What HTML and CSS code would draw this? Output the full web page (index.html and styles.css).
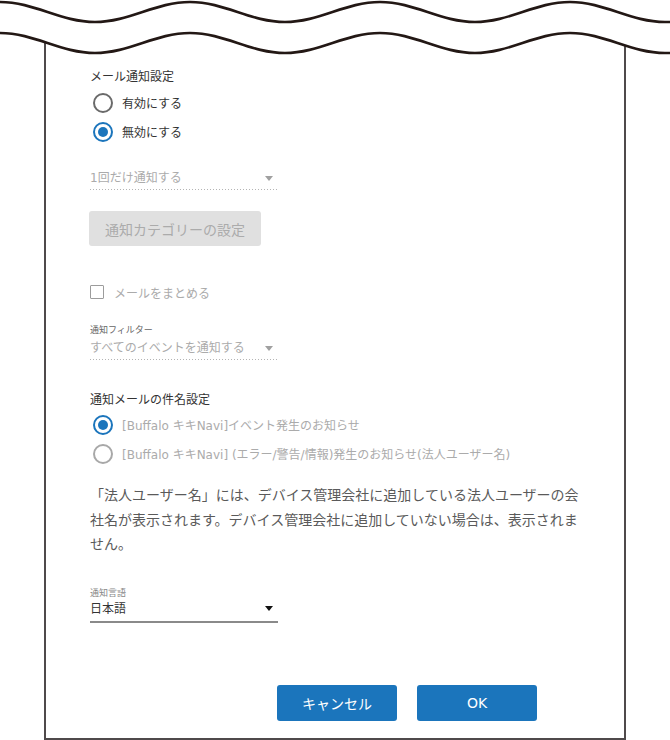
FILE: index.html
```html
<!DOCTYPE html>
<html>
<head>
    <meta charset="UTF-8">
    <meta name="viewport" content="width=device-width, initial-scale=1.0">
    <title>通知設定</title>
    <link rel="stylesheet" href="styles.css">
</head>
<body>
    <div class="sheet">
        <div class="field-title">メール通知設定</div>
        <div class="radio-list">
            <label class="radio"><span class="radio-mark"></span>有効にする</label>
            <label class="radio"><span class="radio-mark is-on"></span>無効にする</label>
        </div>

        <div class="select select-first is-disabled">
            <span>1回だけ通知する</span>
            <span class="caret"></span>
        </div>

        <button class="btn-sub" disabled>通知カテゴリーの設定</button>

        <label class="check is-disabled"><span class="check-box"></span>メールをまとめる</label>

        <div class="field field-filter">
            <div class="field-label">通知フィルター</div>
            <div class="select is-disabled">
                <span>すべてのイベントを通知する</span>
                <span class="caret"></span>
            </div>
        </div>

        <div class="field-title title-subject">通知メールの件名設定</div>
        <div class="radio-list is-disabled">
            <label class="radio"><span class="radio-mark is-on"></span>[Buffalo キキNavi]イベント発生のお知らせ</label>
            <label class="radio"><span class="radio-mark"></span>[Buffalo キキNavi] (エラー/警告/情報)発生のお知らせ(法人ユーザー名)</label>
        </div>

        <p class="note">「法人ユーザー名」には、デバイス管理会社に追加している法人ユーザーの会<br>社名が表示されます。デバイス管理会社に追加していない場合は、表示されま<br>せん。</p>

        <div class="field field-lang">
            <div class="field-label">通知言語</div>
            <div class="select select-solid">
                <span>日本語</span>
                <span class="caret"></span>
            </div>
        </div>

        <div class="actions">
            <button class="btn">キャンセル</button>
            <button class="btn">OK</button>
        </div>
    </div>

    <!-- torn edge over the top of the dialog -->
    <svg class="tear" width="670" height="60" viewBox="0 0 670 60">
        <path fill="#fff" d="M0,0 L0,33 C34.6,33 60.4,53 95,53 S155.4,33 190,33 S250.4,53 285,53 S345.4,33 380,33 S440.4,53 475,53 S535.4,33 570,33 S630.4,53 665,53 S725.4,33 760,33 L760,0 Z"/>
        <path fill="none" stroke="#231815" stroke-width="2.6" d="M0,2 C34.6,2 60.4,22 95,22 S155.4,2 190,2 S250.4,22 285,22 S345.4,2 380,2 S440.4,22 475,22 S535.4,2 570,2 S630.4,22 665,22 S725.4,2 760,2"/>
        <path fill="none" stroke="#231815" stroke-width="2.6" d="M0,33 C34.6,33 60.4,53 95,53 S155.4,33 190,33 S250.4,53 285,53 S345.4,33 380,33 S440.4,53 475,53 S535.4,33 570,33 S630.4,53 665,53 S725.4,33 760,33"/>
    </svg>
</body>
</html>
```

FILE: styles.css
```css
* {
    box-sizing: border-box;
}

body {
    margin: 0;
    width: 670px;
    height: 740px;
    overflow: hidden;
    position: relative;
    background: #fff;
    font-family: "DejaVu Sans", "Noto Sans CJK JP", sans-serif;
    font-size: 12px;
    color: #333;
}

.sheet {
    margin-left: 44px;
    width: 582px;
    height: 740px;
    border: 2px solid #4f4a4b;
    border-top: 0;
    padding: 68px 44px 0 44px;
}

.tear {
    position: absolute;
    top: 0;
    left: 0;
    display: block;
}

.field-title {
    line-height: 18px;
    color: #333;
}

.title-subject {
    margin-top: 31px;
}

.radio-list {
    margin-top: 2px;
}

.title-subject + .radio-list {
    margin-top: 1px;
}

.radio {
    display: flex;
    align-items: center;
    height: 29px;
    color: #333;
}

.radio-mark {
    width: 20px;
    height: 20px;
    margin-left: 3px;
    margin-right: 9px;
    border: 2px solid #6a6a6a;
    border-radius: 50%;
    display: flex;
    align-items: center;
    justify-content: center;
    flex-shrink: 0;
}

.radio-mark.is-on {
    border-color: #1b75bc;
}

.radio-mark.is-on::after {
    content: "";
    width: 10px;
    height: 10px;
    border-radius: 50%;
    background: #1b75bc;
}

.is-disabled .radio {
    color: #ababab;
}

.is-disabled .radio-mark {
    border-color: #a8a8a8;
}

.is-disabled .radio-mark.is-on {
    border-color: #1b75bc;
}

.select {
    width: 188px;
    display: flex;
    align-items: center;
    justify-content: space-between;
    line-height: 20px;
    padding-bottom: 2px;
    padding-right: 5px;
    background: linear-gradient(to right, #b4b4b4 1px, transparent 1px) left bottom / 3px 1px repeat-x;
}

.select-first {
    margin-top: 22px;
}

.select.is-disabled {
    color: #ababab;
}

.caret {
    width: 0;
    height: 0;
    border-left: 4px solid transparent;
    border-right: 4px solid transparent;
    border-top: 5px solid #a0a0a0;
}

.select-solid {
    color: #333;
    background: none;
    border-bottom: 2px solid #8a8a8a;
}

.select-solid .caret {
    border-top-color: #111;
}

.btn-sub {
    display: block;
    margin-top: 21px;
    margin-left: -1px;
    width: 172px;
    height: 35px;
    border: 0;
    border-radius: 3px;
    background: #e0e0e0;
    color: #ababab;
    font-family: inherit;
    font-size: 14px;
    padding: 0;
}

.check {
    display: flex;
    align-items: center;
    height: 20px;
    margin-top: 36px;
    color: #ababab;
}

.check-box {
    width: 14px;
    height: 14px;
    margin-right: 10px;
    border: 1.5px solid #9c9c9c;
    border-radius: 1px;
}

.field-label {
    font-size: 9px;
    line-height: 12px;
    color: #666;
}

.field-filter {
    margin-top: 22px;
}

.field-filter .select {
    margin-top: 2px;
}

.note {
    margin: 15px 0 0 0;
    font-size: 14px;
    line-height: 24.5px;
    color: #5a5a5a;
    white-space: nowrap;
}

.field-lang {
    margin-top: 30px;
}

.field-lang .field-label {
    color: #888;
}

.actions {
    display: flex;
    gap: 20px;
    margin-top: 62px;
    padding-left: 187px;
}

.btn {
    width: 120px;
    height: 36px;
    border: 0;
    border-radius: 3px;
    background: #1b75bc;
    color: #fff;
    font-family: inherit;
    font-size: 14px;
    padding: 0;
}
```
